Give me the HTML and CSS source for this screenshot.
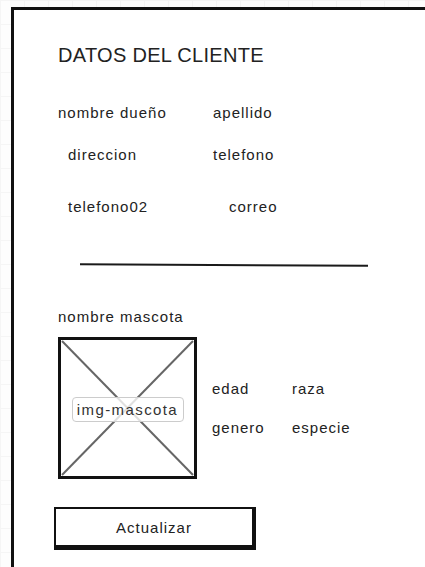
FILE: index.html
```html
<!DOCTYPE html>
<html lang="es">
<head>
    <meta charset="UTF-8">
    <meta name="viewport" content="width=device-width, initial-scale=1.0">
    <title>Datos del cliente</title>
    <link rel="stylesheet" href="styles.css">
</head>
<body>

    <div class="frame">
        <h1 class="title">DATOS DEL CLIENTE</h1>

        <!-- Datos del dueño -->
        <div class="row row-1">
            <span class="field w-155">nombre dueño</span>
            <span class="field">apellido</span>
        </div>
        <div class="row row-2">
            <span class="field w-145 indent">direccion</span>
            <span class="field">telefono</span>
        </div>
        <div class="row row-3">
            <span class="field w-161 indent">telefono02</span>
            <span class="field">correo</span>
        </div>

        <div class="divider"></div>

        <!-- Datos de la mascota -->
        <div class="row pet-name">
            <span class="field">nombre mascota</span>
        </div>

        <div class="pet">
            <div class="pet-img">
                <svg class="pet-cross" viewBox="0 0 139 142" preserveAspectRatio="none">
                    <line x1="4" y1="4" x2="135" y2="138" />
                    <line x1="135" y1="4" x2="4" y2="138" />
                </svg>
                <span class="pet-img-label">img-mascota</span>
            </div>
            <div class="pet-info">
                <div class="row">
                    <span class="field w-80">edad</span>
                    <span class="field">raza</span>
                </div>
                <div class="row row-gap">
                    <span class="field w-80">genero</span>
                    <span class="field">especie</span>
                </div>
            </div>
        </div>

        <button class="btn" type="button">Actualizar</button>
    </div>

</body>
</html>
```

FILE: styles.css
```css
/* Page with a faint wireframe grid */
body {
    margin: 0;
    height: 567px;
    overflow: hidden;
    font-family: 'Liberation Sans', Arial, sans-serif;
    color: #222;
    background-color: #fdfdfd;
    background-image:
        linear-gradient(#f5f5f5 1px, transparent 1px),
        linear-gradient(90deg, #f5f5f5 1px, transparent 1px);
    background-size: 24px 24px;
}

/* Window frame */
.frame {
    margin: 7px 0 0 11px;
    height: 560px;
    box-sizing: border-box;
    padding: 33px 0 0 44px;
    background-color: #fff;
    border-top: 3px solid #111;
    border-left: 3px solid #111;
}

.title {
    margin: 0;
    font-size: 20px;
    font-weight: normal;
    line-height: 24px;
    letter-spacing: 0.3px;
}

/* Label rows */
.row {
    display: flex;
    height: 20px;
    align-items: center;
}

.field {
    font-size: 15px;
    letter-spacing: 1px;
    line-height: 20px;
    white-space: nowrap;
}

.indent {
    margin-left: 10px;
}

.w-155 { width: 155px; }
.w-145 { width: 145px; }
.w-161 { width: 161px; }
.w-80  { width: 80px; }

.row-1 { margin-top: 36px; }
.row-2 { margin-top: 22px; }
.row-3 { margin-top: 32px; }

/* Separator line */
.divider {
    margin: 47px 0 0 22px;
    width: 288px;
    height: 0;
    border-top: 2px solid #1a1a1a;
    transform: rotate(0.25deg);
}

.pet-name {
    margin-top: 41px;
}

/* Pet image and info */
.pet {
    display: flex;
    margin-top: 10px;
}

.pet-img {
    position: relative;
    width: 139px;
    height: 142px;
    box-sizing: border-box;
    border: 3px solid #111;
    display: flex;
    justify-content: center;
    align-items: center;
}

.pet-cross {
    position: absolute;
    left: -3px;
    top: -3px;
    width: 139px;
    height: 142px;
}

.pet-cross line {
    stroke: #666;
    stroke-width: 2;
}

.pet-img-label {
    position: relative;
    width: 112px;
    height: 25px;
    box-sizing: border-box;
    margin-top: 2px;
    border: 1px solid #ccc;
    border-radius: 4px;
    background-color: rgba(255, 255, 255, 0.8);
    font-size: 15px;
    letter-spacing: 1.4px;
    line-height: 23px;
    text-align: center;
    color: #333;
}

.pet-info {
    margin-left: 15px;
    padding-top: 42px;
}

.row-gap {
    margin-top: 19px;
}

/* Update button */
.btn {
    display: block;
    margin: 28px 0 0 -4px;
    width: 202px;
    height: 43px;
    padding: 0;
    background-color: #fff;
    border: 2px solid #111;
    border-right-width: 4px;
    border-bottom-width: 5px;
    font-family: 'Liberation Sans', Arial, sans-serif;
    font-size: 15px;
    letter-spacing: 1px;
    color: #222;
    cursor: pointer;
}
```
